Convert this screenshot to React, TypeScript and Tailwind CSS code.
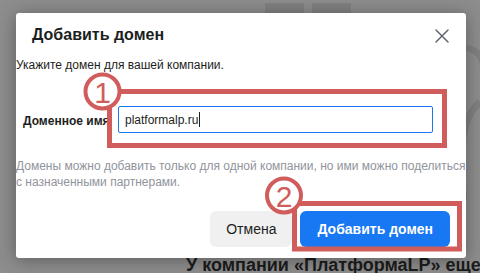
const font = { fontFamily: '"Liberation Sans", Arial, sans-serif' };

function Annotations() {
  const red = "#d05c5c";
  return (
    <svg className="pointer-events-none absolute inset-0" width={480} height={273}>
      <rect x={109.5} y={91.5} width={335} height={54} fill="none" stroke={red} strokeWidth={5} />
      <circle cx={102.5} cy={91.5} r={17} fill="white" stroke={red} strokeWidth={4} />
      <text x={102.5} y={102.5} textAnchor="middle" fontSize={30} fill={red} style={font}>
        1
      </text>
      <rect x={294.5} y={203.5} width={165} height={45.5} fill="none" stroke={red} strokeWidth={5} />
      <circle cx={284} cy={195.5} r={17} fill="white" stroke={red} strokeWidth={4} />
      <text x={284} y={206.5} textAnchor="middle" fontSize={30} fill={red} style={font}>
        2
      </text>
    </svg>
  );
}

function Backdrop() {
  return (
    <div className="flex h-[273px] flex-col bg-[#8d8d8d]">
      <div className="flex gap-[8px] pl-[265px] pt-[3px]">
        <div className="h-[14px] w-[39px] bg-[#818181]" />
        <div className="h-[14px] w-[39px] bg-[#818181]" />
      </div>
      <div className="mt-[237px] whitespace-nowrap pl-[186px] text-[18px] font-bold leading-[22px] text-[#1c1c1c]">
        У компании «ПлатформаLP» еще
      </div>
    </div>
  );
}

function CloseIcon() {
  return (
    <svg width={14} height={14} viewBox="0 0 14 14" className="mt-[4px]">
      <path d="M1 1 L13 13 M13 1 L1 13" stroke="#606770" strokeWidth={1.5} strokeLinecap="round" />
    </svg>
  );
}

function AddDomainModal() {
  return (
    <div className="absolute left-[16px] top-[13px] flex h-[245px] w-[450px] flex-col rounded-[3px] bg-white shadow-[0_2px_18px_rgba(0,0,0,0.35)]">
      <div className="flex h-[32px] items-start justify-between pl-4 pr-[17px] pt-[12px]">
        <h2 className="text-[16px] font-bold leading-[20px] text-[#1c1e21]">Добавить домен</h2>
        <CloseIcon />
      </div>

      <p className="mt-[12px] whitespace-nowrap text-[12px] leading-[16px] text-[#1c1e21]">
        Укажите домен для вашей компании.
      </p>

      <div className="mt-[33px] flex items-center">
        <label className="w-[102px] pl-[7px] pt-[3px] text-[12px] font-bold leading-[16px] text-[#1c1e21]">
          Доменное имя
        </label>
        <div className="flex h-[27px] w-[315px] items-center rounded-[2px] border border-[#1877f2] pl-[6px] text-[12px] text-[#1c1e21]">
          platformalp.ru
          <span className="ml-[1px] h-[15px] w-[1px] bg-[#1c1e21]" />
        </div>
      </div>

      <p className="mt-[25px] whitespace-nowrap text-[12px] leading-[16px] text-[#90949c]">
        Домены можно добавить только для одной компании, но ими можно поделиться
        <br />с назначенными партнерами.
      </p>

      <div className="mt-[21px] flex justify-end gap-[8px] pr-[16px]">
        <button className="h-[36px] rounded-[6px] bg-[#f0f0f0] px-[16px] text-[14px] text-[#1c1e21]">
          Отмена
        </button>
        <button className="h-[36px] rounded-[6px] bg-[#1877f2] px-[17px] text-[14px] font-bold text-white">
          Добавить домен
        </button>
      </div>
    </div>
  );
}

export default function App() {
  return (
    <div className="relative h-[273px] w-[480px] overflow-hidden" style={font}>
      <Backdrop />
      <svg className="absolute left-[440px] top-[40px]" width={40} height={170}>
        <path d="M26 8 Q44 10 44 34" fill="none" stroke="#808080" strokeWidth={6} />
        <path d="M40 62 Q14 84 24 160" fill="none" stroke="#808080" strokeWidth={7} />
      </svg>
      <AddDomainModal />
      <Annotations />
    </div>
  );
}
